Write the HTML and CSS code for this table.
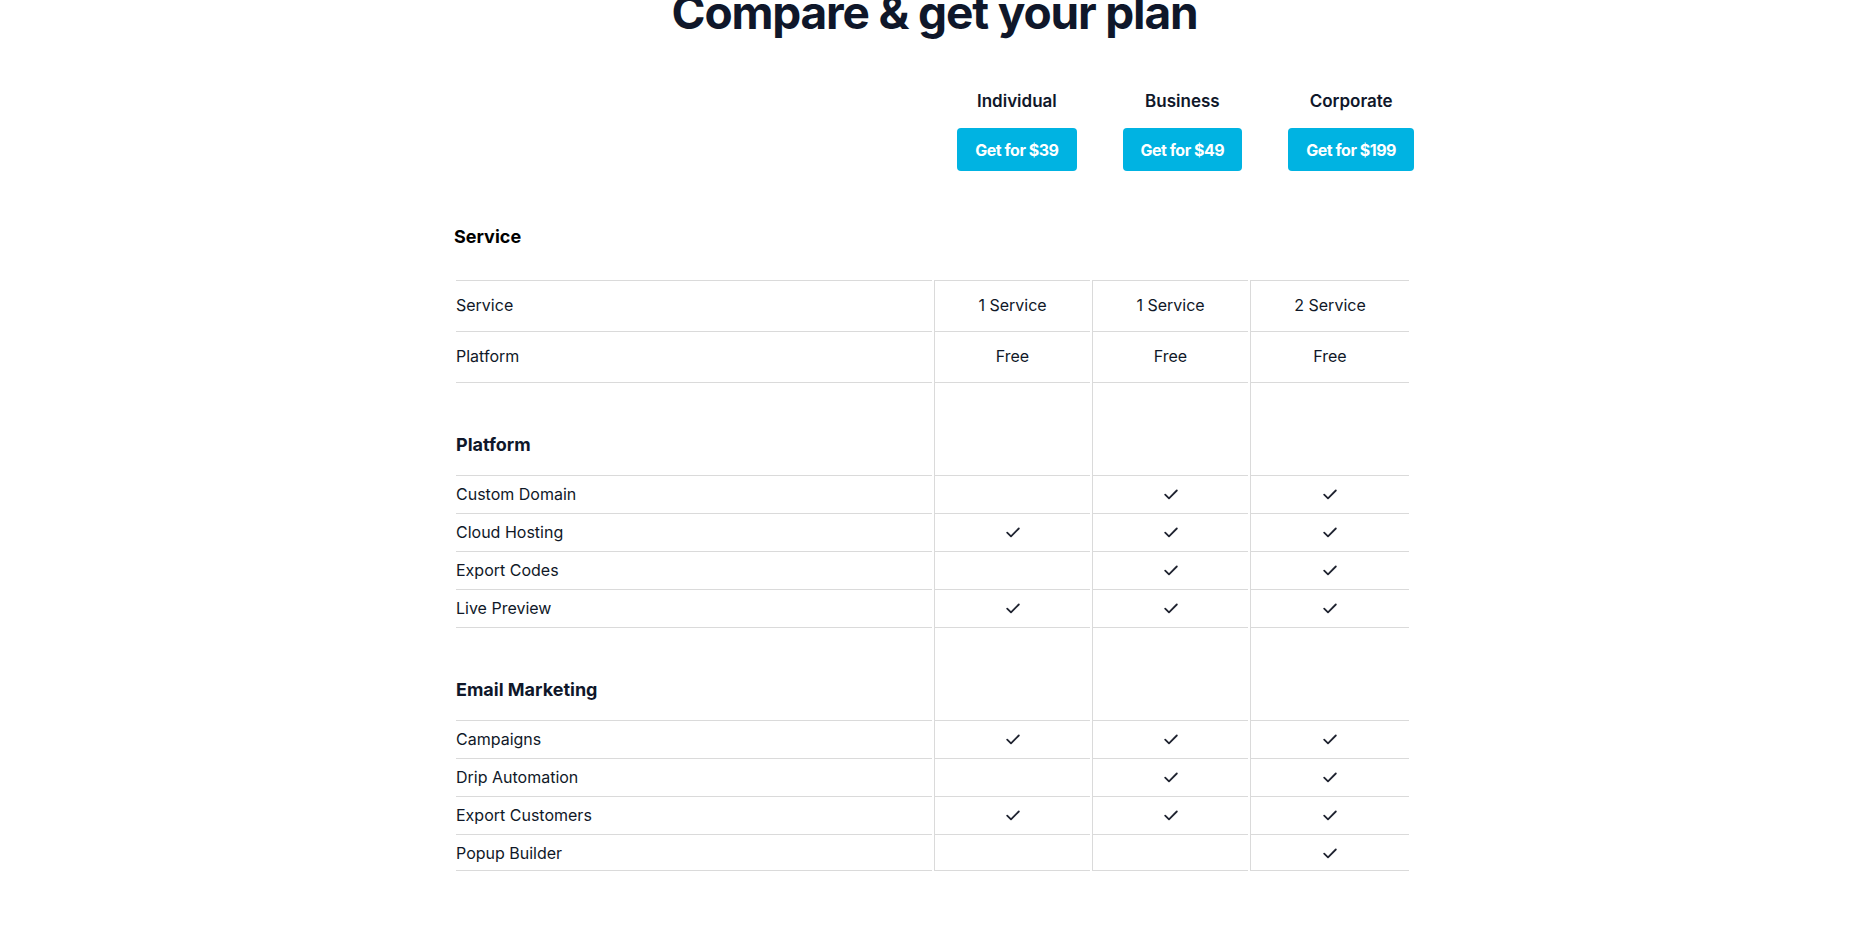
FILE: index.html
```html
<!DOCTYPE html>
<html lang="en">
<head>
<meta charset="utf-8">
<title>Compare &amp; get your plan</title>
<link rel="stylesheet" href="styles.css">
</head>
<body>
<main class="page">
  <h1 class="title">Compare &amp; get your plan</h1>

  <div class="plans">
    <div class="plan">
      <div class="plan-name">Individual</div>
      <a class="btn" href="#">Get for $39</a>
    </div>
    <div class="plan">
      <div class="plan-name">Business</div>
      <a class="btn" href="#">Get for $49</a>
    </div>
    <div class="plan">
      <div class="plan-name">Corporate</div>
      <a class="btn" href="#">Get for $199</a>
    </div>
  </div>

  <h2 class="group-title">Service</h2>

  <div class="table">
    <div class="row tall">
      <div class="cell label">Service</div>
      <div class="cell val">1 Service</div>
      <div class="cell val">1 Service</div>
      <div class="cell val">2 Service</div>
    </div>
    <div class="row tall">
      <div class="cell label">Platform</div>
      <div class="cell val">Free</div>
      <div class="cell val">Free</div>
      <div class="cell val">Free</div>
    </div>

    <div class="row section">
      <div class="cell label">Platform</div>
      <div class="cell val"></div>
      <div class="cell val"></div>
      <div class="cell val"></div>
    </div>
    <div class="row">
      <div class="cell label">Custom Domain</div>
      <div class="cell val"></div>
      <div class="cell val"><svg class="check" viewBox="0 0 14 11"><path d="M1.2 5.6 L5 9.3 L12.8 1.5"/></svg></div>
      <div class="cell val"><svg class="check" viewBox="0 0 14 11"><path d="M1.2 5.6 L5 9.3 L12.8 1.5"/></svg></div>
    </div>
    <div class="row">
      <div class="cell label">Cloud Hosting</div>
      <div class="cell val"><svg class="check" viewBox="0 0 14 11"><path d="M1.2 5.6 L5 9.3 L12.8 1.5"/></svg></div>
      <div class="cell val"><svg class="check" viewBox="0 0 14 11"><path d="M1.2 5.6 L5 9.3 L12.8 1.5"/></svg></div>
      <div class="cell val"><svg class="check" viewBox="0 0 14 11"><path d="M1.2 5.6 L5 9.3 L12.8 1.5"/></svg></div>
    </div>
    <div class="row">
      <div class="cell label">Export Codes</div>
      <div class="cell val"></div>
      <div class="cell val"><svg class="check" viewBox="0 0 14 11"><path d="M1.2 5.6 L5 9.3 L12.8 1.5"/></svg></div>
      <div class="cell val"><svg class="check" viewBox="0 0 14 11"><path d="M1.2 5.6 L5 9.3 L12.8 1.5"/></svg></div>
    </div>
    <div class="row">
      <div class="cell label">Live Preview</div>
      <div class="cell val"><svg class="check" viewBox="0 0 14 11"><path d="M1.2 5.6 L5 9.3 L12.8 1.5"/></svg></div>
      <div class="cell val"><svg class="check" viewBox="0 0 14 11"><path d="M1.2 5.6 L5 9.3 L12.8 1.5"/></svg></div>
      <div class="cell val"><svg class="check" viewBox="0 0 14 11"><path d="M1.2 5.6 L5 9.3 L12.8 1.5"/></svg></div>
    </div>

    <div class="row section">
      <div class="cell label">Email Marketing</div>
      <div class="cell val"></div>
      <div class="cell val"></div>
      <div class="cell val"></div>
    </div>
    <div class="row">
      <div class="cell label">Campaigns</div>
      <div class="cell val"><svg class="check" viewBox="0 0 14 11"><path d="M1.2 5.6 L5 9.3 L12.8 1.5"/></svg></div>
      <div class="cell val"><svg class="check" viewBox="0 0 14 11"><path d="M1.2 5.6 L5 9.3 L12.8 1.5"/></svg></div>
      <div class="cell val"><svg class="check" viewBox="0 0 14 11"><path d="M1.2 5.6 L5 9.3 L12.8 1.5"/></svg></div>
    </div>
    <div class="row">
      <div class="cell label">Drip Automation</div>
      <div class="cell val"></div>
      <div class="cell val"><svg class="check" viewBox="0 0 14 11"><path d="M1.2 5.6 L5 9.3 L12.8 1.5"/></svg></div>
      <div class="cell val"><svg class="check" viewBox="0 0 14 11"><path d="M1.2 5.6 L5 9.3 L12.8 1.5"/></svg></div>
    </div>
    <div class="row">
      <div class="cell label">Export Customers</div>
      <div class="cell val"><svg class="check" viewBox="0 0 14 11"><path d="M1.2 5.6 L5 9.3 L12.8 1.5"/></svg></div>
      <div class="cell val"><svg class="check" viewBox="0 0 14 11"><path d="M1.2 5.6 L5 9.3 L12.8 1.5"/></svg></div>
      <div class="cell val"><svg class="check" viewBox="0 0 14 11"><path d="M1.2 5.6 L5 9.3 L12.8 1.5"/></svg></div>
    </div>
    <div class="row last">
      <div class="cell label">Popup Builder</div>
      <div class="cell val"></div>
      <div class="cell val"></div>
      <div class="cell val"><svg class="check" viewBox="0 0 14 11"><path d="M1.2 5.6 L5 9.3 L12.8 1.5"/></svg></div>
    </div>
  </div>
</main>
</body>
</html>
```

FILE: styles.css
```css
* {
  box-sizing: border-box;
}

html, body {
  margin: 0;
  padding: 0;
  background: #ffffff;
}

body {
  font-family: Inter, "Noto Sans", sans-serif;
  color: #101828;
  overflow: hidden;
}

.page {
  width: 961px;
  margin: 0 auto;
  display: flex;
  flex-direction: column;
}

.title {
  margin: -14px 0 0;
  font-size: 46px;
  line-height: 53px;
  font-weight: 700;
  letter-spacing: -0.025em;
  text-align: center;
  color: #0f172a;
}

.plans {
  margin-top: 50px;
  display: flex;
  justify-content: flex-end;
  gap: 46px;
  padding-right: 1px;
}

.plan {
  display: flex;
  flex-direction: column;
  align-items: center;
  gap: 15px;
}

.plan-name {
  font-size: 17px;
  line-height: 24px;
  font-weight: 600;
  color: #0f172a;
}

.btn {
  height: 43px;
  padding: 0 18px;
  display: inline-flex;
  align-items: center;
  justify-content: center;
  background: #00b3e2;
  color: #ffffff;
  border-radius: 4px;
  font-size: 16px;
  font-weight: 700;
  letter-spacing: -0.03em;
  text-decoration: none;
}

.group-title {
  margin: 54px 0 31px;
  font-size: 18px;
  line-height: 24px;
  font-weight: 700;
  color: #000000;
}

.table {
  margin-left: 2px;
  width: 953px;
  display: flex;
  flex-direction: column;
}

.row {
  display: grid;
  grid-template-columns: 476px 156px 156px 159px;
  column-gap: 2px;
}

.cell {
  border-top: 1px solid #dadada;
  font-size: 16px;
  line-height: 24px;
  padding: 6px 0 7px;
}

.row.tall .cell {
  padding: 12px 0 14px;
}

.row.section .cell {
  padding: 50px 0 18px;
}

.row.last .cell {
  padding-bottom: 5px;
  border-bottom: 1px solid #dadada;
}

.label {
  text-align: left;
}

.row.section .label {
  font-size: 18px;
  font-weight: 700;
  color: #0f172a;
}

.val {
  border-left: 1px solid #dadada;
  display: flex;
  align-items: center;
  justify-content: center;
}

.check {
  width: 14px;
  height: 11px;
  fill: none;
  stroke: #1f2330;
  stroke-width: 1.8;
  stroke-linecap: round;
  stroke-linejoin: round;
}
```
